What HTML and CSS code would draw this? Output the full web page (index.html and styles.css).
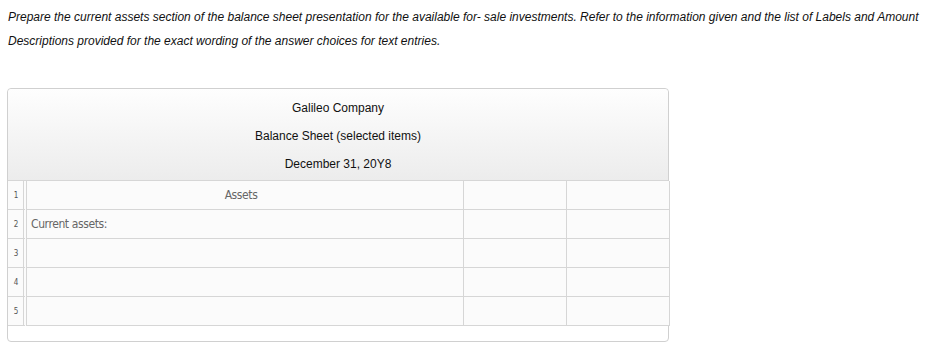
FILE: index.html
```html
<!DOCTYPE html>
<html>
<head>
    <meta charset="utf-8">
    <title>Balance Sheet</title>
    <link rel="stylesheet" href="styles.css">
</head>
<body>
    <p class="prompt">Prepare the current assets section of the balance sheet presentation for the available for- sale investments. Refer to the information given and the list of Labels and Amount Descriptions provided for the exact wording of the answer choices for text entries.</p>

    <div class="sheet">
        <div class="sheet-head">
            <div>Galileo Company</div>
            <div>Balance Sheet (selected items)</div>
            <div>December 31, 20Y8</div>
        </div>

        <table class="grid">
            <colgroup>
                <col class="col-num">
                <col class="col-label">
                <col class="col-amt">
                <col class="col-amt">
            </colgroup>
            <tr>
                <td class="num">1</td>
                <td class="label center">Assets</td>
                <td></td>
                <td></td>
            </tr>
            <tr>
                <td class="num">2</td>
                <td class="label">Current assets:</td>
                <td></td>
                <td></td>
            </tr>
            <tr>
                <td class="num">3</td>
                <td class="label"></td>
                <td></td>
                <td></td>
            </tr>
            <tr>
                <td class="num">4</td>
                <td class="label"></td>
                <td></td>
                <td></td>
            </tr>
            <tr>
                <td class="num">5</td>
                <td class="label"></td>
                <td></td>
                <td></td>
            </tr>
        </table>

        <div class="sheet-foot"></div>
    </div>
</body>
</html>
```

FILE: styles.css
```css
:root {
    --line: #d6d6d6;
    --cell-bg: #fbfbfb;
    --label-color: #666;
}

* {
    box-sizing: border-box;
}

body {
    margin: 0;
    padding: 0 7px;
    background: #fff;
    color: #111;
    font-family: "Liberation Sans", Arial, sans-serif;
}

.prompt {
    margin: 5px 0 0 1px;
    width: 920px;
    font-size: 12px;
    font-style: italic;
    line-height: 24px;
}

.sheet {
    margin-top: 35px;
    width: 662px;
    border: 1px solid #d0d0d0;
    border-radius: 4px;
    background: #fff;
}

.sheet-head {
    padding: 5px 0 2px;
    text-align: center;
    font-size: 12px;
    line-height: 28px;
    color: #111;
    background: linear-gradient(to bottom, #fefefe, #ececec);
    border-radius: 4px 4px 0 0;
    border-bottom: 1px solid var(--line);
}

.grid {
    border-collapse: separate;
    border-spacing: 0;
    width: 662px;
    table-layout: fixed;
}

.col-num {
    width: 19px;
}

.col-label {
    width: 437px;
}

.col-amt {
    width: 103px;
}

.grid td {
    height: 29px;
    padding: 0;
    background: var(--cell-bg);
    border-right: 1px solid var(--line);
    border-bottom: 1px solid var(--line);
}

.grid td.num {
    border-right: 4px double var(--line);
    text-align: center;
    font-family: "DejaVu Sans Condensed", sans-serif;
    font-stretch: condensed;
    font-size: 8px;
    color: #555;
    padding-left: 1px;
}

.grid td.label {
    padding-left: 4px;
    font-family: "DejaVu Sans Condensed", sans-serif;
    font-stretch: condensed;
    font-size: 12px;
    letter-spacing: -0.4px;
    color: var(--label-color);
}

.grid td.center {
    text-align: center;
    padding: 0 8px 0 0;
}

.sheet-foot {
    height: 15px;
}
```
